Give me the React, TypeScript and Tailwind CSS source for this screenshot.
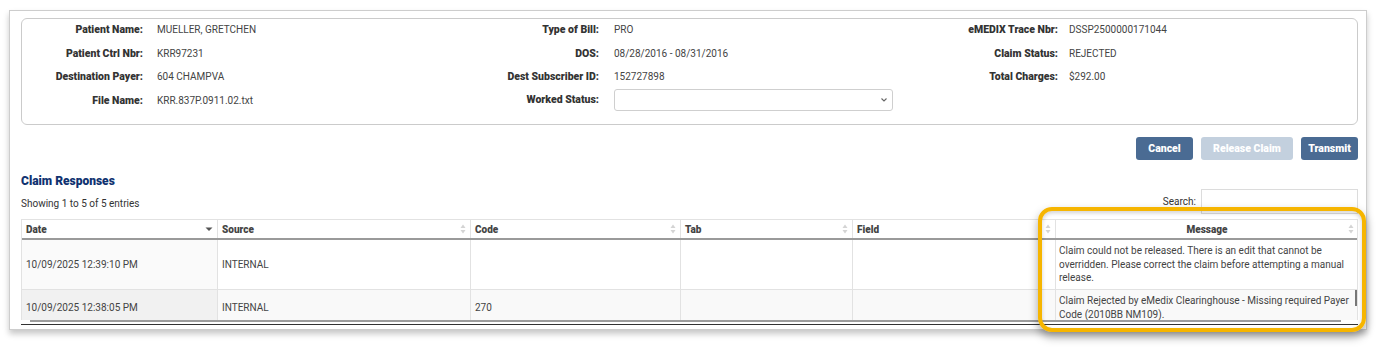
import React from "react";

const font = "font-['Roboto','Liberation_Sans',sans-serif]";

type Field = { label: string; value?: string; select?: boolean };

const col1: Field[] = [
  { label: "Patient Name:", value: "MUELLER, GRETCHEN" },
  { label: "Patient Ctrl Nbr:", value: "KRR97231" },
  { label: "Destination Payer:", value: "604 CHAMPVA" },
  { label: "File Name:", value: "KRR.837P.0911.02.txt" },
];

const col2: Field[] = [
  { label: "Type of Bill:", value: "PRO" },
  { label: "DOS:", value: "08/28/2016 - 08/31/2016" },
  { label: "Dest Subscriber ID:", value: "152727898" },
  { label: "Worked Status:", select: true },
];

const col3: Field[] = [
  { label: "eMEDIX Trace Nbr:", value: "DSSP2500000171044" },
  { label: "Claim Status:", value: "REJECTED" },
  { label: "Total Charges:", value: "$292.00" },
];

function FieldColumn({
  fields,
  width,
  labelWidth,
  gap,
}: {
  fields: Field[];
  width: string;
  labelWidth: string;
  gap: string;
}) {
  return (
    <div className={width}>
      {fields.map((f) => (
        <div key={f.label} className="flex h-[23.5px] items-baseline leading-[14px]">
          <div className={`${labelWidth} shrink-0 text-right text-[10.5px] font-black text-[#333]`}>
            {f.label}
          </div>
          <div className={gap}>
            {f.select ? (
              <div className="-mt-[3px] flex h-[22px] w-[279px] items-center justify-end rounded-[3px] border border-[#cfcfcf] bg-white pr-[4px]">
                <svg width="8" height="6" viewBox="0 0 8 6">
                  <path d="M1.5 1.5 L4 4 L6.5 1.5" fill="none" stroke="#666" strokeWidth="1.1" />
                </svg>
              </div>
            ) : (
              <span className="text-[10px] text-[#444]">{f.value}</span>
            )}
          </div>
        </div>
      ))}
    </div>
  );
}

function SortBoth() {
  return (
    <svg width="6" height="10" viewBox="0 0 6 10" className="shrink-0">
      <path d="M3 0.5 L5.5 4 L0.5 4 Z" fill="#d4d4d4" />
      <path d="M3 9.5 L5.5 6 L0.5 6 Z" fill="#d4d4d4" />
    </svg>
  );
}

function SortDown() {
  return (
    <svg width="8" height="6" viewBox="0 0 8 6" className="shrink-0">
      <path d="M0.5 1.5 L7.5 1.5 L4 5 Z" fill="#555" />
    </svg>
  );
}

const grid = "grid grid-cols-[196px_253px_210px_172px_203px_302px]";

function Cell({ children, className = "" }: { children?: React.ReactNode; className?: string }) {
  return (
    <div className={`flex items-center border-r border-[#e2e2e2] px-[4px] text-[10px] text-[#444] ${className}`}>
      {children}
    </div>
  );
}

export default function App() {
  return (
    <div className={`relative h-[354px] w-[1382px] overflow-hidden bg-white ${font}`}>
      <div className="ml-[9px] mt-[10px] h-[320px] w-[1358px] border border-[#cdcdcd] bg-white pl-[11px] pr-[8px] pt-[7px] shadow-[0_4px_6px_rgba(0,0,0,0.22)]">
        {/* claim summary card */}
        <div className="flex rounded-[6px] border border-[#cbcbcb] pb-[9px] pt-[2px]">
          <FieldColumn fields={col1} width="w-[445px]" labelWidth="w-[121px]" gap="ml-[14px]" />
          <FieldColumn fields={col2} width="w-[444px]" labelWidth="w-[132px]" gap="ml-[15px]" />
          <FieldColumn fields={col3} width="flex-1" labelWidth="w-[147px]" gap="ml-[11px]" />
        </div>

        <div className="mt-[12px] flex justify-end gap-[8px]">
          <button className="h-[23px] w-[57px] rounded-[3px] bg-[#4a6b93] text-[10.5px] font-black text-white">
            Cancel
          </button>
          <button className="h-[23px] w-[92px] rounded-[3px] bg-[#c3d0de] text-[10.5px] font-black text-white">
            Release Claim
          </button>
          <button className="h-[23px] w-[57px] rounded-[3px] bg-[#4a6b93] text-[10.5px] font-black text-white">
            Transmit
          </button>
        </div>

        <div className="mt-[14px] h-[14px] text-[12px] font-black leading-[14px] text-[#0f3270]">
          Claim Responses
        </div>

        <div className="mt-[1px] flex h-[25px] items-center justify-between">
          <span className="mt-[3px] text-[10px] text-[#333]">Showing 1 to 5 of 5 entries</span>
          <div className="flex items-center gap-[5px]">
            <span className="text-[10px] text-[#333]">Search:</span>
            <div className="h-[25px] w-[157px] border border-[#dcdcdc] bg-white" />
          </div>
        </div>

        {/* responses table */}
        <div className="mt-[5px] h-[101px] overflow-hidden border-x border-[#e2e2e2]">
          <div className={`${grid} h-[21px] border-b-2 border-t border-b-[#9a9a9a] border-t-[#e2e2e2]`}>
            <Cell className="justify-between font-black text-[#333]">
              Date <SortDown />
            </Cell>
            <Cell className="justify-between font-black text-[#333]">
              Source <SortBoth />
            </Cell>
            <Cell className="justify-between font-black text-[#333]">
              Code <SortBoth />
            </Cell>
            <Cell className="justify-between font-black text-[#333]">
              Tab <SortBoth />
            </Cell>
            <Cell className="justify-between font-black text-[#333]">
              Field <SortBoth />
            </Cell>
            <Cell className="justify-between border-r-0 font-black text-[#333]">
              <span className="w-[6px]" />
              Message <SortBoth />
            </Cell>
          </div>

          <div className={`${grid} border-b border-[#e2e2e2] bg-white`}>
            <Cell className="bg-[#fafafa]">10/09/2025 12:39:10 PM</Cell>
            <Cell>INTERNAL</Cell>
            <Cell />
            <Cell />
            <Cell />
            <div className="px-[3px] py-[4px] text-[10px] leading-[13.7px] text-[#444]">
              Claim could not be released. There is an edit that cannot be overridden. Please correct
              the claim before attempting a manual release.
            </div>
          </div>

          <div className={`${grid} bg-[#f9f9f9]`}>
            <Cell className="bg-[#f1f1f1]">10/09/2025 12:38:05 PM</Cell>
            <Cell>INTERNAL</Cell>
            <Cell>270</Cell>
            <Cell />
            <Cell />
            <div className="relative px-[3px] py-[4px] text-[10px] leading-[13.7px] text-[#444]">
              Claim Rejected by eMedix Clearinghouse - Missing required Payer Code (2010BB NM109).
              <div className="absolute right-[1px] top-0 h-[16px] w-[2px] bg-[#777]" />
            </div>
          </div>
        </div>
        <div className="h-[4px]">
          <div className="ml-[9px] h-[2px] w-[1311px] bg-[#9c9c9c]" />
        </div>
        <div className="h-[1px] bg-[#333]" />
      </div>

      {/* highlight callout */}
      <div className="absolute left-[1038px] top-[207px] h-[125px] w-[328px] rounded-[14px] border-[4px] border-[#f6b500] shadow-[0_5px_10px_rgba(0,0,0,0.35),inset_0_2px_4px_rgba(0,0,0,0.18)]" />
    </div>
  );
}
